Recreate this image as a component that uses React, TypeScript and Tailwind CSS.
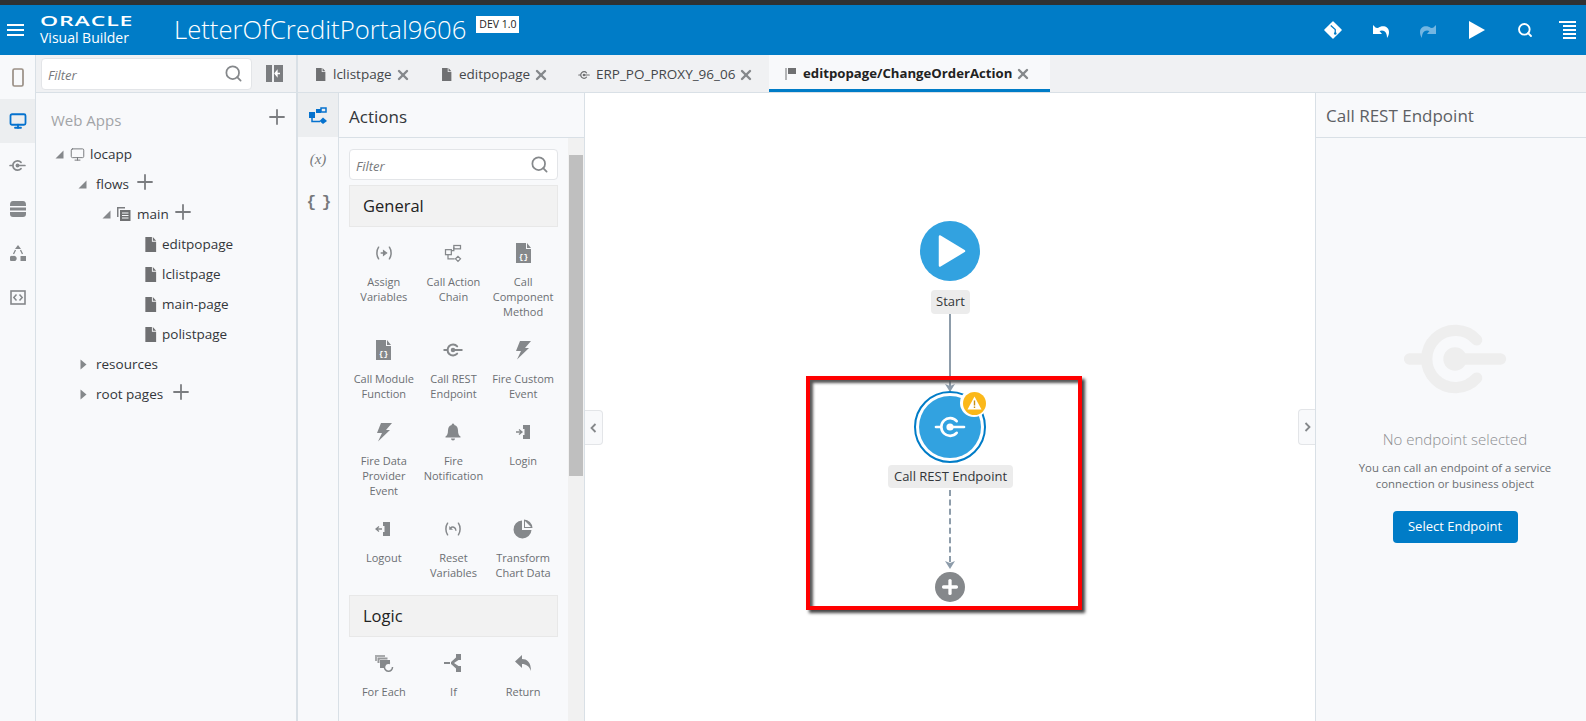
import type { ReactNode } from "react";
import { Monitor, Plus, Search, X } from "lucide-react";

const ICON = "#85888b";

function Svg({ size = 18, color = ICON, children }: { size?: number; color?: string; children: ReactNode }) {
  return (
    <svg width={size} height={size} viewBox="0 0 24 24" fill="none" stroke={color} style={{ color }}>
      {children}
    </svg>
  );
}

function ConnIcon({ size = 18, color = ICON, sw = 2.4 }: { size?: number; color?: string; sw?: number }) {
  return (
    <Svg size={size} color={color}>
      <g strokeWidth={sw} strokeLinecap="round">
        <path d="M17 7.6A6.6 6.6 0 1 0 17 16.4" />
        <path d="M1.5 12H5" />
        <path d="M12 12H22.5" />
      </g>
      <circle cx="12" cy="12" r="2.7" fill={color} stroke="none" />
    </Svg>
  );
}

function FileIcon({ size = 15, color = "#6f7072" }: { size?: number; color?: string }) {
  return (
    <svg width={size} height={size} viewBox="0 0 16 16">
      <path d="M2.5 0H9.5L9.5 5H14V16H2.5Z M10.5 0L14 4H10.5Z" fill={color} />
    </svg>
  );
}

function PagesIcon() {
  return (
    <svg width="14" height="14" viewBox="0 0 14 14">
      <path d="M0 0H8V1.500H1.500V10H0Z" fill="#7b7d80" />
      <path d="M3 3H13.500V14H3Z" fill="#6f7072" />
      <path d="M5 6H11.500M5 8.500H11.500M5 11H11.500" stroke="#f8f9fb" strokeWidth="1" />
    </svg>
  );
}

function Tri({ open }: { open: boolean }) {
  return open ? (
    <svg width="9" height="9" viewBox="0 0 9 9" className="shrink-0">
      <path d="M8.500 .5V8.500H.5Z" fill="#85888b" />
    </svg>
  ) : (
    <svg width="7" height="11" viewBox="0 0 7 11" className="shrink-0">
      <path d="M.5 .5L6.500 5.500L.5 10.500Z" fill="#85888b" />
    </svg>
  );
}

function TreeRow({ pl, tri, icon, label, plus, ml = "ml-[7px]", plusMl = "ml-[2px]" }: { pl: string; tri?: "open" | "closed"; icon?: ReactNode; label: string; plus?: boolean; ml?: string; plusMl?: string }) {
  return (
    <div className={`flex h-[30px] items-center ${pl} text-[13.5px] text-[#33363a]`}>
      <div className="flex items-center gap-[6px]">
        {tri && <Tri open={tri === "open"} />}
        {icon}
      </div>
      <span className={ml}>{label}</span>
      {plus && <Plus size={24} color="#7b7d80" strokeWidth={1.8} className={`mb-1 ${plusMl}`} />}
    </div>
  );
}

const assign = (
  <Svg size={20}>
    <path d="M5.500 5C2.800 9 2.800 15 5.500 19M18.500 5C21.200 9 21.200 15 18.500 19" strokeWidth="1.800" strokeLinecap="round" />
    <path d="M8 12H12M11.500 9.500L15 12L11.500 14.500Z" fill={ICON} strokeWidth="1.600" />
  </Svg>
);
const chain = (
  <Svg size={20}>
    <g strokeWidth="1.500">
      <rect x="3" y="8" width="7" height="6" />
      <rect x="13" y="3" width="8" height="4" />
      <path d="M10 9H13V5M6 14V19H14" />
      <path d="M18 16L21 19L18 22L15 19Z" />
    </g>
  </Svg>
);
const docBraces = (
  <svg width="17" height="20" viewBox="0 0 17 20">
    <path d="M1 0H11V6H16V20H1Z M12 0L16 5H12Z" fill={ICON} />
    <text x="8.500" y="16" textAnchor="middle" fontSize="8" fontWeight="700" fill="#fff" fontFamily="Liberation Mono, monospace">{"{}"}</text>
  </svg>
);
const bolt = (
  <svg width="18" height="20" viewBox="0 0 18 20">
    <path d="M6 1H17L11 8H15L3 19.500L7 11H2Z" fill={ICON} />
  </svg>
);
const bell = (
  <svg width="18" height="18" viewBox="0 0 18 18">
    <path d="M9 0.500A1.300 1.300 0 0 1 10.300 2C13 2.600 14 5 14 7.500C14 11 15 12.500 16.500 13.500V14.500H1.500V13.500C3 12.500 4 11 4 7.500C4 5 5 2.600 7.700 2A1.300 1.300 0 0 1 9 .5Z M7 15.500H11A2 2 0 0 1 7 15.500Z" fill={ICON} />
  </svg>
);
const login = (
  <svg width="17" height="16" viewBox="0 0 17 16">
    <path d="M8 1H15V15H8V11H9.500V5H8Z" fill={ICON} />
    <path d="M1 8H6M4 5.500L7 8L4 10.500" stroke={ICON} strokeWidth="1.300" fill="none" />
  </svg>
);
const logout = (
  <svg width="17" height="16" viewBox="0 0 17 16">
    <path d="M8 1H15V15H8V11H9.500V5H8Z" fill={ICON} />
    <path d="M7 8H2M4 5.500L1 8L4 10.500" stroke={ICON} strokeWidth="1.300" fill="none" />
  </svg>
);
const reset = (
  <Svg size={20}>
    <path d="M5.500 5C2.800 9 2.800 15 5.500 19M18.500 5C21.200 9 21.200 15 18.500 19" strokeWidth="1.800" strokeLinecap="round" />
    <path d="M9 11C11 8.500 15.500 9.500 15.500 14" strokeWidth="1.700" />
    <path d="M7.500 8.500V13H12Z" fill={ICON} stroke="none" />
  </Svg>
);
const pie = (
  <svg width="20" height="20" viewBox="0 0 20 20">
    <path d="M9 1.500V11H18.500A9 9 0 1 1 9 1.500Z" fill={ICON} />
    <path d="M11 0.500A9 9 0 0 1 19.500 9H11Z" fill={ICON} />
    <path d="M12 2V8H18" fill="#f8f9fb" />
  </svg>
);
const forEach = (
  <svg width="20" height="18" viewBox="0 0 20 18">
    <path d="M1 1H11V3H3V7H1Z" fill="#a9abad" />
    <path d="M3.500 3.500H13.500V5.500H5.500V9H3.500Z" fill="#97999b" />
    <path d="M6 6H16V9A5 5 0 0 0 10.500 14H6Z" fill={ICON} />
    <path d="M18.500 13A4 4 0 1 1 16 9.500" stroke={ICON} strokeWidth="1.500" fill="none" />
  </svg>
);
const ifIcon = (
  <svg width="18" height="20" viewBox="0 0 18 20">
    <path d="M0 9H6V11H0Z M12 1H17V7H14.500L10 10L14.500 13H17V19H12V15.500L7 11V9L12 4.500Z" fill={ICON} />
  </svg>
);
const ret = (
  <svg width="18" height="18" viewBox="0 0 18 18">
    <path d="M8 1V5C13 5 17 8 17 17C15 12 12 10 8 10V14L1 7.500Z" fill={ICON} />
  </svg>
);

const general: { icon: ReactNode; lines: string[] }[] = [
  { icon: assign, lines: ["Assign", "Variables"] },
  { icon: chain, lines: ["Call Action", "Chain"] },
  { icon: docBraces, lines: ["Call", "Component", "Method"] },
  { icon: docBraces, lines: ["Call Module", "Function"] },
  { icon: <ConnIcon size={20} />, lines: ["Call REST", "Endpoint"] },
  { icon: bolt, lines: ["Fire Custom", "Event"] },
  { icon: bolt, lines: ["Fire Data", "Provider", "Event"] },
  { icon: bell, lines: ["Fire", "Notification"] },
  { icon: login, lines: ["Login"] },
  { icon: logout, lines: ["Logout"] },
  { icon: reset, lines: ["Reset", "Variables"] },
  { icon: pie, lines: ["Transform", "Chart Data"] },
];

const logic = [
  { icon: forEach, lines: ["For Each"] },
  { icon: ifIcon, lines: ["If"] },
  { icon: ret, lines: ["Return"] },
];

function ActionGrid({ items }: { items: { icon: ReactNode; lines: string[] }[] }) {
  return (
    <div className="mt-[10px] grid grid-cols-3">
      {items.map((it) => (
        <div key={it.lines.join(" ")} className="flex flex-col items-center pb-[15px] text-center text-[11px] leading-[15px] text-[#6c6f73]">
          <div className="flex h-8 items-center justify-center">{it.icon}</div>
          <div className="mt-[5px]">
            {it.lines.map((l) => (
              <div key={l}>{l}</div>
            ))}
          </div>
        </div>
      ))}
    </div>
  );
}

function Tab({ icon, label, active, width }: { icon: ReactNode; label: string; active?: boolean; width: string }) {
  return (
    <div className={`flex h-full items-center gap-[6px] ${width} ${active ? "border-b-[3px] border-[#007cc7] bg-[#f8f9fb] pl-4 pt-[3px] text-[13.2px] font-bold text-[#222]" : "pl-4 pt-[2px] text-[13.5px] text-[#44474a]"}`}>
      {icon}
      <span>{label}</span>
      <X size={16} color="#85888b" strokeWidth={3.6} className="-ml-[3px]" />
    </div>
  );
}

function FilterBox({ className }: { className: string }) {
  return (
    <div className={`flex items-center justify-between rounded-sm border border-[#e3e5e8] bg-white pl-[6px] pr-2 ${className}`}>
      <span className="pt-[5px] text-[13px] italic text-[#77797c]">Filter</span>
      <Search size={19} color="#85888b" strokeWidth={2.2} />
    </div>
  );
}

function Canvas() {
  return (
    <main className="relative flex-1 bg-white">
      {/* flow nodes sit at fixed spots on the canvas */}
      <div className="absolute left-[335px] top-[128px] flex h-[60px] w-[60px] items-center justify-center rounded-full bg-[#32a2e0]">
        <svg width="28" height="34" viewBox="0 0 28 34" className="ml-1">
          <path d="M2 2.500L26 17L2 31.500Z" fill="#fff" stroke="#fff" strokeWidth="2.500" strokeLinejoin="round" />
        </svg>
      </div>
      <div className="absolute left-[346px] top-[197px] flex h-[24px] w-[39px] items-center justify-center rounded bg-[#ececec] text-[13px] text-[#33363a]">Start</div>
      <div className="absolute left-[364px] top-[221px] h-[78px] w-[2px] bg-[#8d9caa]" />
      <svg width="12" height="10" viewBox="0 0 12 10" className="absolute left-[359px] top-[290px]">
        <path d="M1 1L6 9L11 1L6 3Z" fill="#8d9caa" />
      </svg>
      <div className="absolute left-[329px] top-[298px] flex h-[72px] w-[72px] items-center justify-center rounded-full border-2 border-[#007cc7] bg-white">
        <div className="flex h-[62px] w-[62px] items-center justify-center rounded-full bg-[#32a2e0]">
          <ConnIcon size={32} color="#fff" sw={2} />
        </div>
      </div>
      <div className="absolute left-[375px] top-[296px] flex h-[28px] w-[28px] items-center justify-center rounded-full bg-white">
        <div className="flex h-[23px] w-[23px] items-center justify-center rounded-full bg-[#fbb81a]">
          <svg width="15" height="14" viewBox="0 0 15 14">
            <path d="M7.500 .5L14.500 13.500H.5Z" fill="#fff" />
            <path d="M6.800 4.500H8.200V9.500H6.800ZM6.800 10.500H8.200V12H6.800Z" fill="#c98f10" />
          </svg>
        </div>
      </div>
      <div className="absolute left-[303px] top-[372px] flex h-[23px] w-[125px] items-center justify-center rounded bg-[#ececec] text-[13px] text-[#33363a]">Call REST Endpoint</div>
      <div className="absolute left-[364px] top-[397px] h-[72px] border-l-2 border-dashed border-[#8d9caa]" />
      <svg width="12" height="10" viewBox="0 0 12 10" className="absolute left-[359px] top-[467px]">
        <path d="M1 1L6 9L11 1L6 3Z" fill="#8d9caa" />
      </svg>
      <div className="absolute left-[350px] top-[479px] flex h-[30px] w-[30px] items-center justify-center rounded-full bg-[#85888b]">
        <Plus size={22} color="#fff" strokeWidth={3.6} />
      </div>
      {/* red annotation box drawn over the screenshot */}
      <div className="pointer-events-none absolute left-[221px] top-[283px] h-[234px] w-[276px] border-4 border-[#ff0000] shadow-[3px_3px_3px_#444,inset_3px_3px_3px_#555]" />
      <div className="absolute left-0 top-[317px] flex h-[35px] w-[18px] items-center justify-center rounded-r-sm border border-l-0 border-[#e3e5e8] bg-[#f8f9fb]">
        <svg width="7" height="10" viewBox="0 0 7 10"><path d="M5.500 1L1.500 5L5.500 9" stroke="#85888b" strokeWidth="1.800" fill="none" /></svg>
      </div>
      <div className="absolute right-0 top-[316px] flex h-[36px] w-[17px] items-center justify-center rounded-l-sm border border-r-0 border-[#e3e5e8] bg-[#f8f9fb]">
        <svg width="7" height="10" viewBox="0 0 7 10"><path d="M1.500 1L5.500 5L1.500 9" stroke="#85888b" strokeWidth="1.800" fill="none" /></svg>
      </div>
    </main>
  );
}

export default function App() {
  return (
    <div className="flex h-[721px] w-[1586px] flex-col overflow-hidden bg-[#f8f9fb] font-['Open_Sans',sans-serif]">
      <div className="h-[5px] bg-[#2f3133]" />
      <header className="flex h-[50px] items-center bg-[#007cc7] text-white">
        <div className="ml-[7px] flex w-[17px] flex-col gap-[3px]">
          <span className="h-[2px] bg-white" />
          <span className="h-[2px] bg-white" />
          <span className="h-[2px] bg-white" />
        </div>
        <div className="ml-4 w-[134px] leading-none">
          <div className="origin-left scale-x-[1.65] text-[14px] font-semibold leading-[13px] tracking-[0.5px]">ORACLE</div>
          <div className="mt-[2px] text-[14px] leading-[17px]">Visual Builder</div>
        </div>
        <h1 className="text-[25.7px] font-light leading-none">LetterOfCreditPortal9606</h1>
        <span className="mb-[11px] ml-[10px] flex h-[17px] w-[43px] items-center justify-center bg-white text-[10.5px] text-[#222]">DEV 1.0</span>
        <div className="ml-auto flex items-center">
          <svg width="18" height="18" viewBox="0 0 20 20" className="mr-[29px]">
            <path d="M10 1L19 10L10 19L1 10Z" fill="#fff" stroke="#fff" strokeWidth="1.500" strokeLinejoin="round" />
            <path d="M7.500 5L12.500 9.500V14M12.500 9.500" stroke="#007cc7" strokeWidth="1.400" fill="none" />
            <circle cx="12.500" cy="14" r="1.400" fill="#007cc7" />
          </svg>
          <svg width="20" height="18" viewBox="0 0 20 18" className="mr-[27px]">
            <path d="M7 7C11 3.500 18 5 18 11C18 13 17.500 15 16 17C16.300 11.500 13 8 8.500 10L11 13H2V4L4.800 6.800Z" fill="#fff" />
          </svg>
          <svg width="20" height="18" viewBox="0 0 20 18" className="mr-[31px] scale-x-[-1]">
            <path d="M7 7C11 3.500 18 5 18 11C18 13 17.500 15 16 17C16.300 11.500 13 8 8.500 10L11 13H2V4L4.800 6.800Z" fill="#73b6e2" />
          </svg>
          <svg width="16" height="18" viewBox="0 0 16 18" className="mr-[32px]">
            <path d="M0 0L16 9L0 18Z" fill="#fff" />
          </svg>
          <Search size={16} color="#fff" strokeWidth={2.8} className="mr-[26px]" />
          <div className="mr-[10px] flex w-[17px] flex-col items-end gap-[2px]">
            <span className="h-[2px] w-[17px] bg-white" />
            <span className="h-[2px] w-[13px] bg-white" />
            <span className="h-[2px] w-[13px] bg-white" />
            <span className="h-[2px] w-[13px] bg-white" />
            <span className="h-[2px] w-[13px] bg-white" />
          </div>
        </div>
      </header>

      <div className="flex min-h-0 flex-1">
        <nav className="flex w-[36px] shrink-0 flex-col items-center border-r border-[#d9e0e6]">
          <div className="flex h-[44px] w-full items-center justify-center">
            <svg width="12" height="19" viewBox="0 0 12 19"><rect x="1" y="1" width="10" height="17" rx="1.500" fill="none" stroke="#9a8f85" strokeWidth="1.700" /></svg>
          </div>
          <div className="flex h-[44px] w-full items-center justify-center bg-[#eceef0]">
            <Monitor size={18} color="#0572ce" strokeWidth={2.4} />
          </div>
          <div className="flex h-[44px] w-full items-center justify-center"><ConnIcon size={17} /></div>
          <div className="flex h-[44px] w-full items-center justify-center">
            <svg width="16" height="16" viewBox="0 0 16 16"><path d="M3 0H13Q16 0 16 4V5H0V4Q0 0 3 0ZM0 6.500H16V9.500H0ZM0 11H16V13Q16 16 13 16H3Q0 16 0 13Z" fill={ICON} /></svg>
          </div>
          <div className="flex h-[44px] w-full items-center justify-center">
            <svg width="16" height="16" viewBox="0 0 16 16">
              <path d="M8 0L11 4H5Z M3 11A2.700 2.700 0 1 1 3 16A2.700 2.700 0 1 1 3 11ZM10.500 11H16V16H10.500Z" fill={ICON} />
              <path d="M5.500 5L3.500 9M10.500 5L12.500 9" stroke={ICON} strokeWidth="1.300" />
            </svg>
          </div>
          <div className="flex h-[44px] w-full items-center justify-center">
            <svg width="16" height="15" viewBox="0 0 16 15">
              <rect x="1" y="1" width="14" height="13" fill="none" stroke={ICON} strokeWidth="1.600" />
              <path d="M6.500 4.500L3.800 7.500L6.500 10.500M9.500 4.500L12.200 7.500L9.500 10.500" stroke={ICON} strokeWidth="1.500" fill="none" />
            </svg>
          </div>
        </nav>

        <aside className="flex w-[262px] shrink-0 flex-col border-r-2 border-[#d9e0e6]">
          <div className="flex h-[38px] shrink-0 items-center border-b border-[#d9e0e6] bg-[#f0f1f3] pl-[5px]">
            <FilterBox className="h-[32px] w-[211px]" />
            <svg width="17" height="17" viewBox="0 0 17 17" className="ml-[14px]">
              <path d="M0 0H6V17H0Z M8 0H17V17H8Z" fill="#7b7d80" />
              <path d="M14 8.500H11M11 6L9 8.500L11 11Z" stroke="#fff" strokeWidth="1.300" fill="#fff" />
            </svg>
          </div>
          <div className="flex h-[46px] items-center justify-between pl-[15px] pr-[7px] pt-[5px]">
            <span className="pt-1 text-[15px] text-[#a2a4a7]">Web Apps</span>
            <Plus size={24} color="#7b7d80" strokeWidth={1.8} className="mb-1" />
          </div>
          <TreeRow pl="pl-[19px]" tri="open" icon={<Monitor size={15} color="#7b7d80" strokeWidth={1.6} />} label="locapp" ml="ml-[5px]" />
          <TreeRow pl="pl-[42px]" tri="open" label="flows" ml="ml-[9px]" plus plusMl="ml-[4px]" />
          <TreeRow pl="pl-[66px]" tri="open" icon={<PagesIcon />} label="main" ml="ml-[6px]" plus />
          <TreeRow pl="pl-[107px]" icon={<FileIcon />} label="editpopage" ml="ml-[4px]" />
          <TreeRow pl="pl-[107px]" icon={<FileIcon />} label="lclistpage" ml="ml-[4px]" />
          <TreeRow pl="pl-[107px]" icon={<FileIcon />} label="main-page" ml="ml-[4px]" />
          <TreeRow pl="pl-[107px]" icon={<FileIcon />} label="polistpage" ml="ml-[4px]" />
          <TreeRow pl="pl-[44px]" tri="closed" label="resources" ml="ml-[9px]" />
          <TreeRow pl="pl-[44px]" tri="closed" label="root pages" ml="ml-[9px]" plus plusMl="ml-[6px]" />
        </aside>

        <div className="flex min-w-0 flex-1 flex-col">
          <div className="flex h-[38px] shrink-0 border-b border-[#d9e0e6] bg-[#f0f1f3]">
            <Tab width="w-[126px]" icon={<FileIcon size={13} />} label="lclistpage" />
            <Tab width="w-[138px]" icon={<FileIcon size={13} />} label="editpopage" />
            <Tab width="w-[207px]" icon={<ConnIcon size={12} color="#6f7072" />} label="ERP_PO_PROXY_96_06" />
            <Tab
              active
              width="w-[281px]"
              icon={
                <svg width="12" height="13" viewBox="0 0 12 13">
                  <path d="M1 1V13" stroke="#6f7072" strokeWidth="1" />
                  <path d="M3 1H11V7H3Z" fill="#6f7072" />
                </svg>
              }
              label="editpopage/ChangeOrderAction"
            />
          </div>

          <div className="flex min-h-0 flex-1">
            <div className="flex w-[40px] shrink-0 flex-col items-center">
              <div className="flex h-[44px] w-full items-center justify-center bg-[#eceef0]">
                <svg width="18" height="18" viewBox="0 0 18 18">
                  <path d="M7 3H12V7H7ZM0 6H6V12H0Z" fill="#0572ce" />
                  <path d="M7 5H12V2H17V6H12M3 12V15.500H11" stroke="#0572ce" strokeWidth="1.500" fill="none" />
                  <path d="M14 11.500L18 15L14 18L10.500 15Z" fill="#0572ce" />
                </svg>
              </div>
              <div className="flex h-[44px] items-center font-['Liberation_Serif',serif] text-[15px] italic text-[#77797c]">(x)</div>
              <div className="flex h-[44px] items-center font-['Liberation_Mono',monospace] text-[16px] font-bold tracking-[-2px] text-[#77797c]">{"{ }"}</div>
            </div>

            <section className="flex w-[247px] shrink-0 flex-col border-x border-[#d9e0e6]">
              <div className="flex h-[45px] shrink-0 items-center border-b border-[#d9e0e6] pl-[10px] pt-1 text-[17px] text-[#33363a]">Actions</div>
              <div className="flex min-h-0 flex-1">
                <div className="min-w-0 flex-1 overflow-hidden pl-[10px] pr-[10px]">
                  <FilterBox className="mt-[11px] h-[31px]" />
                  <div className="mt-[5px] flex h-[42px] items-center border border-[#e8e8e8] bg-[#f2f2f2] pl-[13px] text-[16.5px] text-[#222]">General</div>
                  <ActionGrid items={general} />
                  <div className="flex h-[42px] items-center border border-[#e8e8e8] bg-[#f2f2f2] pl-[13px] text-[16.5px] text-[#222]">Logic</div>
                  <ActionGrid items={logic} />
                </div>
                <div className="w-[16px] shrink-0 bg-[#f1f1f1] pt-[17px]">
                  <div className="mx-auto h-[321px] w-[14px] bg-[#bfbfbf]" />
                </div>
              </div>
            </section>

            <Canvas />

            <section className="flex w-[271px] shrink-0 flex-col border-l border-[#d9e0e6]">
              <div className="flex h-[45px] w-full shrink-0 items-center border-b border-[#d9e0e6] pl-[10px] pt-[2px] text-[17px] text-[#5d6064]">Call REST Endpoint</div>
              <div className="flex flex-col items-center pl-2">
                <div className="mt-[169px]">
                  <ConnIcon size={104} color="#eeeeee" sw={2.6} />
                </div>
                <div className="mt-[17px] text-[15px] font-light text-[#8c8e91]">No endpoint selected</div>
                <div className="mt-[9px] text-center text-[11.4px] leading-[16px] text-[#6c6f73]">
                  You can call an endpoint of a service
                  <br />
                  connection or business object
                </div>
                <button className="mt-[19px] h-[32px] w-[125px] rounded-sm bg-[#007cc7] text-[13px] text-white">Select Endpoint</button>
              </div>
            </section>
          </div>
        </div>
      </div>
    </div>
  );
}
